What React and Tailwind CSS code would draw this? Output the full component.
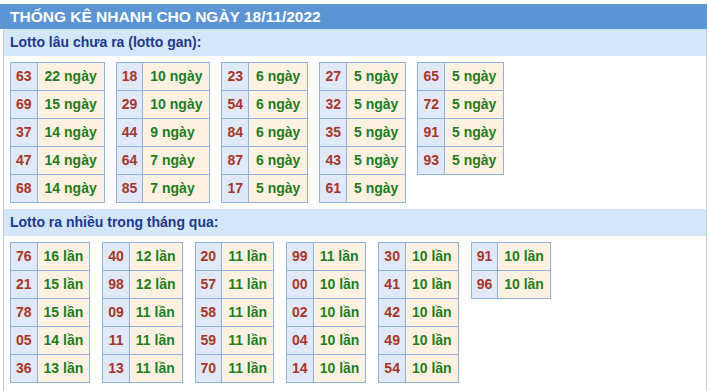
const gan = [
	[['63', '22'], ['69', '15'], ['37', '14'], ['47', '14'], ['68', '14']],
	[['18', '10'], ['29', '10'], ['44', '9'], ['64', '7'], ['85', '7']],
	[['23', '6'], ['54', '6'], ['84', '6'], ['87', '6'], ['17', '5']],
	[['27', '5'], ['32', '5'], ['35', '5'], ['43', '5'], ['61', '5']],
	[['65', '5'], ['72', '5'], ['91', '5'], ['93', '5']],
]

const nhieu = [
	[['76', '16'], ['21', '15'], ['78', '15'], ['05', '14'], ['36', '13']],
	[['40', '12'], ['98', '12'], ['09', '11'], ['11', '11'], ['13', '11']],
	[['20', '11'], ['57', '11'], ['58', '11'], ['59', '11'], ['70', '11']],
	[['99', '11'], ['00', '10'], ['02', '10'], ['04', '10'], ['14', '10']],
	[['30', '10'], ['41', '10'], ['42', '10'], ['49', '10'], ['54', '10']],
	[['91', '10'], ['96', '10']],
]

function Box({ rows, unit, wide }) {
	return (
		<table className="border-collapse border border-[#8fb2e2] text-[14px] font-bold">
			<tbody>
				{rows.map(([n, v], i) => (
					<tr key={i} className="h-[28px]">
						<td className="border border-[#8fb2e2] bg-[#dfe9f8] px-[5px] text-center text-[#a8352a]">{n}</td>
						<td className={(wide ? 'px-[7px] ' : 'px-[6px] ') + 'border border-[#8fb2e2] bg-[#fdf2e2] text-left text-[#1f7d1f] whitespace-nowrap'}>{v} {unit}</td>
					</tr>
				))}
			</tbody>
		</table>
	)
}

function Title({ children }) {
	return (
		<div className="h-[27px] bg-[#d4e6fa] pl-[6px] flex items-center text-[14px] font-bold text-[#1c3a8c]">
			{children}
		</div>
	)
}

export default function App() {
	return (
		<div className="bg-white w-[710px] h-[391px] pt-[4px]" style={{ fontFamily: '"Liberation Sans", Arial, sans-serif' }}>
			<div className="w-[707px]">
				<div className="h-[25px] bg-[#5b95d3] pl-[10px] flex items-center text-white text-[15.5px] font-bold">
					THỐNG KÊ NHANH CHO NGÀY 18/11/2022
				</div>
				<div className="ml-[3px] border-l border-r border-[#c8ccd3] pb-[8px]">
					<Title>Lotto lâu chưa ra (lotto gan):</Title>
					<div className="flex items-start gap-[11px] pl-[6px] pt-[6px] pb-[6px]">
						{gan.map((t, i) => <Box key={i} rows={t} unit="ngày" wide />)}
					</div>
					<Title>Lotto ra nhiều trong tháng qua:</Title>
					<div className="flex items-start gap-[12px] pl-[6px] pt-[6px]">
						{nhieu.map((t, i) => <Box key={i} rows={t} unit="lần" />)}
					</div>
				</div>
			</div>
		</div>
	)
}
